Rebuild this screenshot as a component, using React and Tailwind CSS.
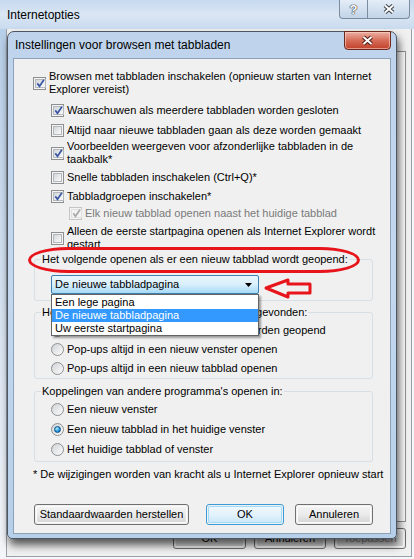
import React from "react";

// Windows 7 checkbox
function Check({ checked, disabled }) {
  return (
    <span
      className={`w-[13px] h-[13px] shrink-0 border p-[1px] bg-[#f4f4f4] flex ${
        disabled ? "border-[#c5c5c5]" : "border-[#8e8f8f]"
      }`}>
      <span
        className={`flex-1 flex items-center justify-center border ${
          disabled
            ? "border-[#e0e0e0] bg-[#f4f4f4]"
            : "border-[#b5b8bd] bg-gradient-to-br from-[#d3d6da] to-[#fbfbfb]"
        }`}>
        {checked && (
          <svg width="9" height="9" viewBox="0 0 9 9">
            <path
              d="M1.3 4.4 L3.5 7.2 L7.9 0.8"
              fill="none"
              stroke={disabled ? "#a8a8a8" : "#3a56a3"}
              strokeWidth="1.7"
            />
          </svg>
        )}
      </span>
    </span>
  );
}

function Radio({ checked }) {
  return (
    <span className="w-[13px] h-[13px] shrink-0 rounded-full border border-[#8e8f8f] bg-gradient-to-br from-[#cfd2d6] to-[#fdfdfd] flex items-center justify-center">
      {checked && (
        <span className="w-[7px] h-[7px] rounded-full border border-[#0b4f86] bg-[radial-gradient(circle_at_35%_30%,#b6ecff,#2a9ee0_55%,#0d5e9e)]" />
      )}
    </span>
  );
}

function Row({ children, checked, disabled, className, radio }) {
  return (
    <div className={`flex items-center gap-[3px] ${className}`}>
      {radio ? <Radio checked={checked} /> : <Check checked={checked} disabled={disabled} />}
      <div className={disabled ? "text-[#7a7a7a]" : ""}>{children}</div>
    </div>
  );
}

function WinButton({ children, className, focused, dim }) {
  return (
    <div
      className={`h-[21px] rounded-[3px] border p-[1px] ${
        focused ? "border-[#3c9ad8]" : "border-[#707070]"
      } ${className}`}>
      <div
        className={`h-full rounded-[2px] flex items-center justify-center ${
          focused
            ? "bg-gradient-to-b from-[#f0f8fd] via-[#e3f2fb] to-[#c9e7f8] shadow-[inset_0_0_0_1px_#9fdcf9]"
            : "bg-gradient-to-b from-[#f3f3f3] via-[#ebebeb] to-[#d4d4d4] shadow-[inset_0_0_0_1px_#fcfcfc]"
        } ${dim ? "text-[#8d8d8d]" : ""}`}>
        {children}
      </div>
    </div>
  );
}

export default function App() {
  return (
    <div className="relative w-[414px] h-[559px] overflow-hidden bg-[#f4f6f9] text-black text-[11px] leading-[13px] font-['Liberation_Sans',Arial,sans-serif]">
      {/* achtergrondvenster Internetopties */}
      <div className="h-[29px] flex items-start bg-gradient-to-b from-[#c6d9ef] via-[#dae6f3] to-[#c9dbef]">
        <span className="ml-[7px] mt-[9px] text-[12px]">Internetopties</span>
        <div className="ml-auto mr-[4px] flex">
          <div className="w-[29px] h-[19px] border border-t-0 border-[#7b8ba0] rounded-bl-[4px] bg-gradient-to-b from-[#e4edf7] to-[#c2d4e8] flex items-center justify-center">
            <span className="text-[13px] font-bold text-white [text-shadow:0_0_1px_#333,0_0_1px_#333,0_0_1px_#333]">?</span>
          </div>
          <div className="w-[42px] h-[19px] border border-t-0 border-l-0 border-[#7b8ba0] rounded-br-[4px] bg-gradient-to-b from-[#e4edf7] to-[#c2d4e8] flex items-center justify-center">
            <svg width="12" height="10" viewBox="0 0 12 10">
              <path d="M2 1.5 L10 8.5 M10 1.5 L2 8.5" stroke="#3a3f47" strokeWidth="4" />
              <path d="M2 1.5 L10 8.5 M10 1.5 L2 8.5" stroke="#fff" strokeWidth="2" />
            </svg>
          </div>
        </div>
      </div>
      <div className="flex h-[528px]">
        <div className="w-[6px] bg-gradient-to-b from-[#b8cfe9] to-[#f4f6f9]" />
        <div className="w-[406px] flex flex-col bg-[#f0f0f0] border-l border-b border-r border-[#9aa0a8]">
          <div className="flex-1 mt-[22px] ml-[6px] mr-[5px] border border-[#8e9094] bg-[#fbfbfb]" />
          <div className="flex justify-end gap-[8px] mt-[6px] mb-[7px] mr-[5px]">
            <WinButton className="w-[73px]">OK</WinButton>
            <WinButton className="w-[72px]">Annuleren</WinButton>
            <WinButton className="w-[72px]" dim>
              Toepassen
            </WinButton>
          </div>
        </div>
      </div>

      {/* dialoog */}
      <div className="absolute left-[7px] top-[31px] w-[390px] h-[508px] flex flex-col rounded-t-[7px] rounded-b-[5px] border border-[#4d5663] bg-gradient-to-b from-[#bfd4ec] via-[#c3d8ef] to-[#b7cfe9] shadow-[2px_6px_9px_rgba(0,0,0,0.65)]">
        <div className="h-[26px] flex items-start">
          <span className="ml-[7px] mt-[7px] text-[12px]">Instellingen voor browsen met tabbladen</span>
          <div className="ml-auto mr-[5px] w-[47px] h-[19px] -mt-[1px] rounded-b-[4px] border border-[#6a2a1e] bg-gradient-to-b from-[#eab0a4] via-[#d66b57] to-[#c0402a] shadow-[inset_0_0_0_1px_rgba(255,210,200,0.6)] flex items-center justify-center">
            <svg width="13" height="11" viewBox="0 0 13 11">
              <path d="M2.5 2 L10.5 9 M10.5 2 L2.5 9" stroke="#4a1a12" strokeWidth="4" />
              <path d="M2.5 2 L10.5 9 M10.5 2 L2.5 9" stroke="#fff" strokeWidth="2" />
            </svg>
          </div>
        </div>

        <div className="mx-[5px] mb-[4px] flex-1 border border-[#8ca2bb] bg-[#f0f0f0] flex flex-col">
          <Row checked className="mt-[11px] ml-[19px]">
            Browsen met tabbladen inschakelen (opnieuw starten van Internet
            <br />
            Explorer vereist)
          </Row>
          <Row checked className="mt-[8px] ml-[37px]">
            Waarschuwen als meerdere tabbladen worden gesloten
          </Row>
          <Row className="mt-[7px] ml-[37px]">Altijd naar nieuwe tabbladen gaan als deze worden gemaakt</Row>
          <Row checked className="mt-[3px] ml-[37px]">
            Voorbeelden weergeven voor afzonderlijke tabbladen in de
            <br />
            taakbalk*
          </Row>
          <Row className="mt-[5px] ml-[37px]">Snelle tabbladen inschakelen (Ctrl+Q)*</Row>
          <Row checked className="mt-[6px] ml-[37px]">
            Tabbladgroepen inschakelen*
          </Row>
          <Row checked disabled className="mt-[4px] ml-[55px]">
            Elk nieuw tabblad openen naast het huidige tabblad
          </Row>
          <Row className="mt-[5px] ml-[37px]">
            Alleen de eerste startpagina openen als Internet Explorer wordt
            <br />
            gestart
          </Row>

          <fieldset className="mt-[2px] ml-[20px] w-[339px] border border-[#d5dfe5] rounded-[3px] pb-[6px]">
            <legend className="ml-[6px] px-[1px]">Het volgende openen als er een nieuw tabblad wordt geopend:</legend>
            <div className="relative mt-[9px] ml-[16px] w-[208px]">
              <div className="h-[19px] border border-[#3c7fb1] rounded-[2px] bg-gradient-to-b from-[#eaf6fd] via-[#d9f0fc] to-[#a7d9f5] flex items-center pl-[3px] pr-[6px]">
                <span>De nieuwe tabbladpagina</span>
                <svg className="ml-auto" width="7" height="4" viewBox="0 0 7 4">
                  <path d="M0 0 H7 L3.5 4 Z" fill="#000" />
                </svg>
              </div>
              <div className="absolute left-0 top-full w-[208px] z-10 bg-white border border-[#646464] shadow-[2px_2px_2px_rgba(0,0,0,0.35)] flex flex-col">
                <div className="h-[13px] pl-[3px] mt-[1px]">Een lege pagina</div>
                <div className="h-[13px] pl-[3px] bg-[#3399ff] text-white">De nieuwe tabbladpagina</div>
                <div className="h-[13px] pl-[3px]">Uw eerste startpagina</div>
              </div>
            </div>
          </fieldset>

          <fieldset className="mt-[5px] ml-[20px] w-[339px] border border-[#d5dfe5] rounded-[3px] pb-[3px]">
            <legend className="ml-[6px] px-[1px]">Het volgende doen als er een pop-up wordt gevonden:</legend>
            <div className="flex flex-col gap-[6px] mt-[5px] ml-[16px]">
              <Row radio checked>
                Laten bepalen hoe pop-ups moeten worden geopend
              </Row>
              <Row radio>Pop-ups altijd in een nieuw venster openen</Row>
              <Row radio>Pop-ups altijd in een nieuw tabblad openen</Row>
            </div>
          </fieldset>

          <fieldset className="mt-[6px] ml-[20px] w-[339px] border border-[#d5dfe5] rounded-[3px] pb-[5px]">
            <legend className="ml-[6px] px-[1px]">Koppelingen van andere programma's openen in:</legend>
            <div className="flex flex-col gap-[7px] mt-[5px] ml-[16px]">
              <Row radio>Een nieuw venster</Row>
              <Row radio checked>
                Een nieuw tabblad in het huidige venster
              </Row>
              <Row radio>Het huidige tabblad of venster</Row>
            </div>
          </fieldset>

          <div className="mt-[6px] ml-[19px]">* De wijzigingen worden van kracht als u Internet Explorer opnieuw start</div>

          <div className="mt-[23px] ml-[20px] flex">
            <WinButton className="w-[155px]">Standaardwaarden herstellen</WinButton>
            <WinButton focused className="w-[78px] ml-[17px]">
              OK
            </WinButton>
            <WinButton className="w-[78px] ml-[11px]">Annuleren</WinButton>
          </div>
        </div>
      </div>

      {/* rode markering */}
      <div className="absolute left-[28px] top-[247px] w-[332px] h-[26px] border-[3px] border-[#e8141c] rounded-[40px_/_13px]" />
      <svg className="absolute left-[262px] top-[276px]" width="52" height="25" viewBox="0 0 52 25">
        <polygon points="4,12 26,4 26,8 48,8 48,17 26,17 26,21" fill="none" stroke="#e8141c" strokeWidth="3" strokeLinejoin="round" />
      </svg>
    </div>
  );
}
